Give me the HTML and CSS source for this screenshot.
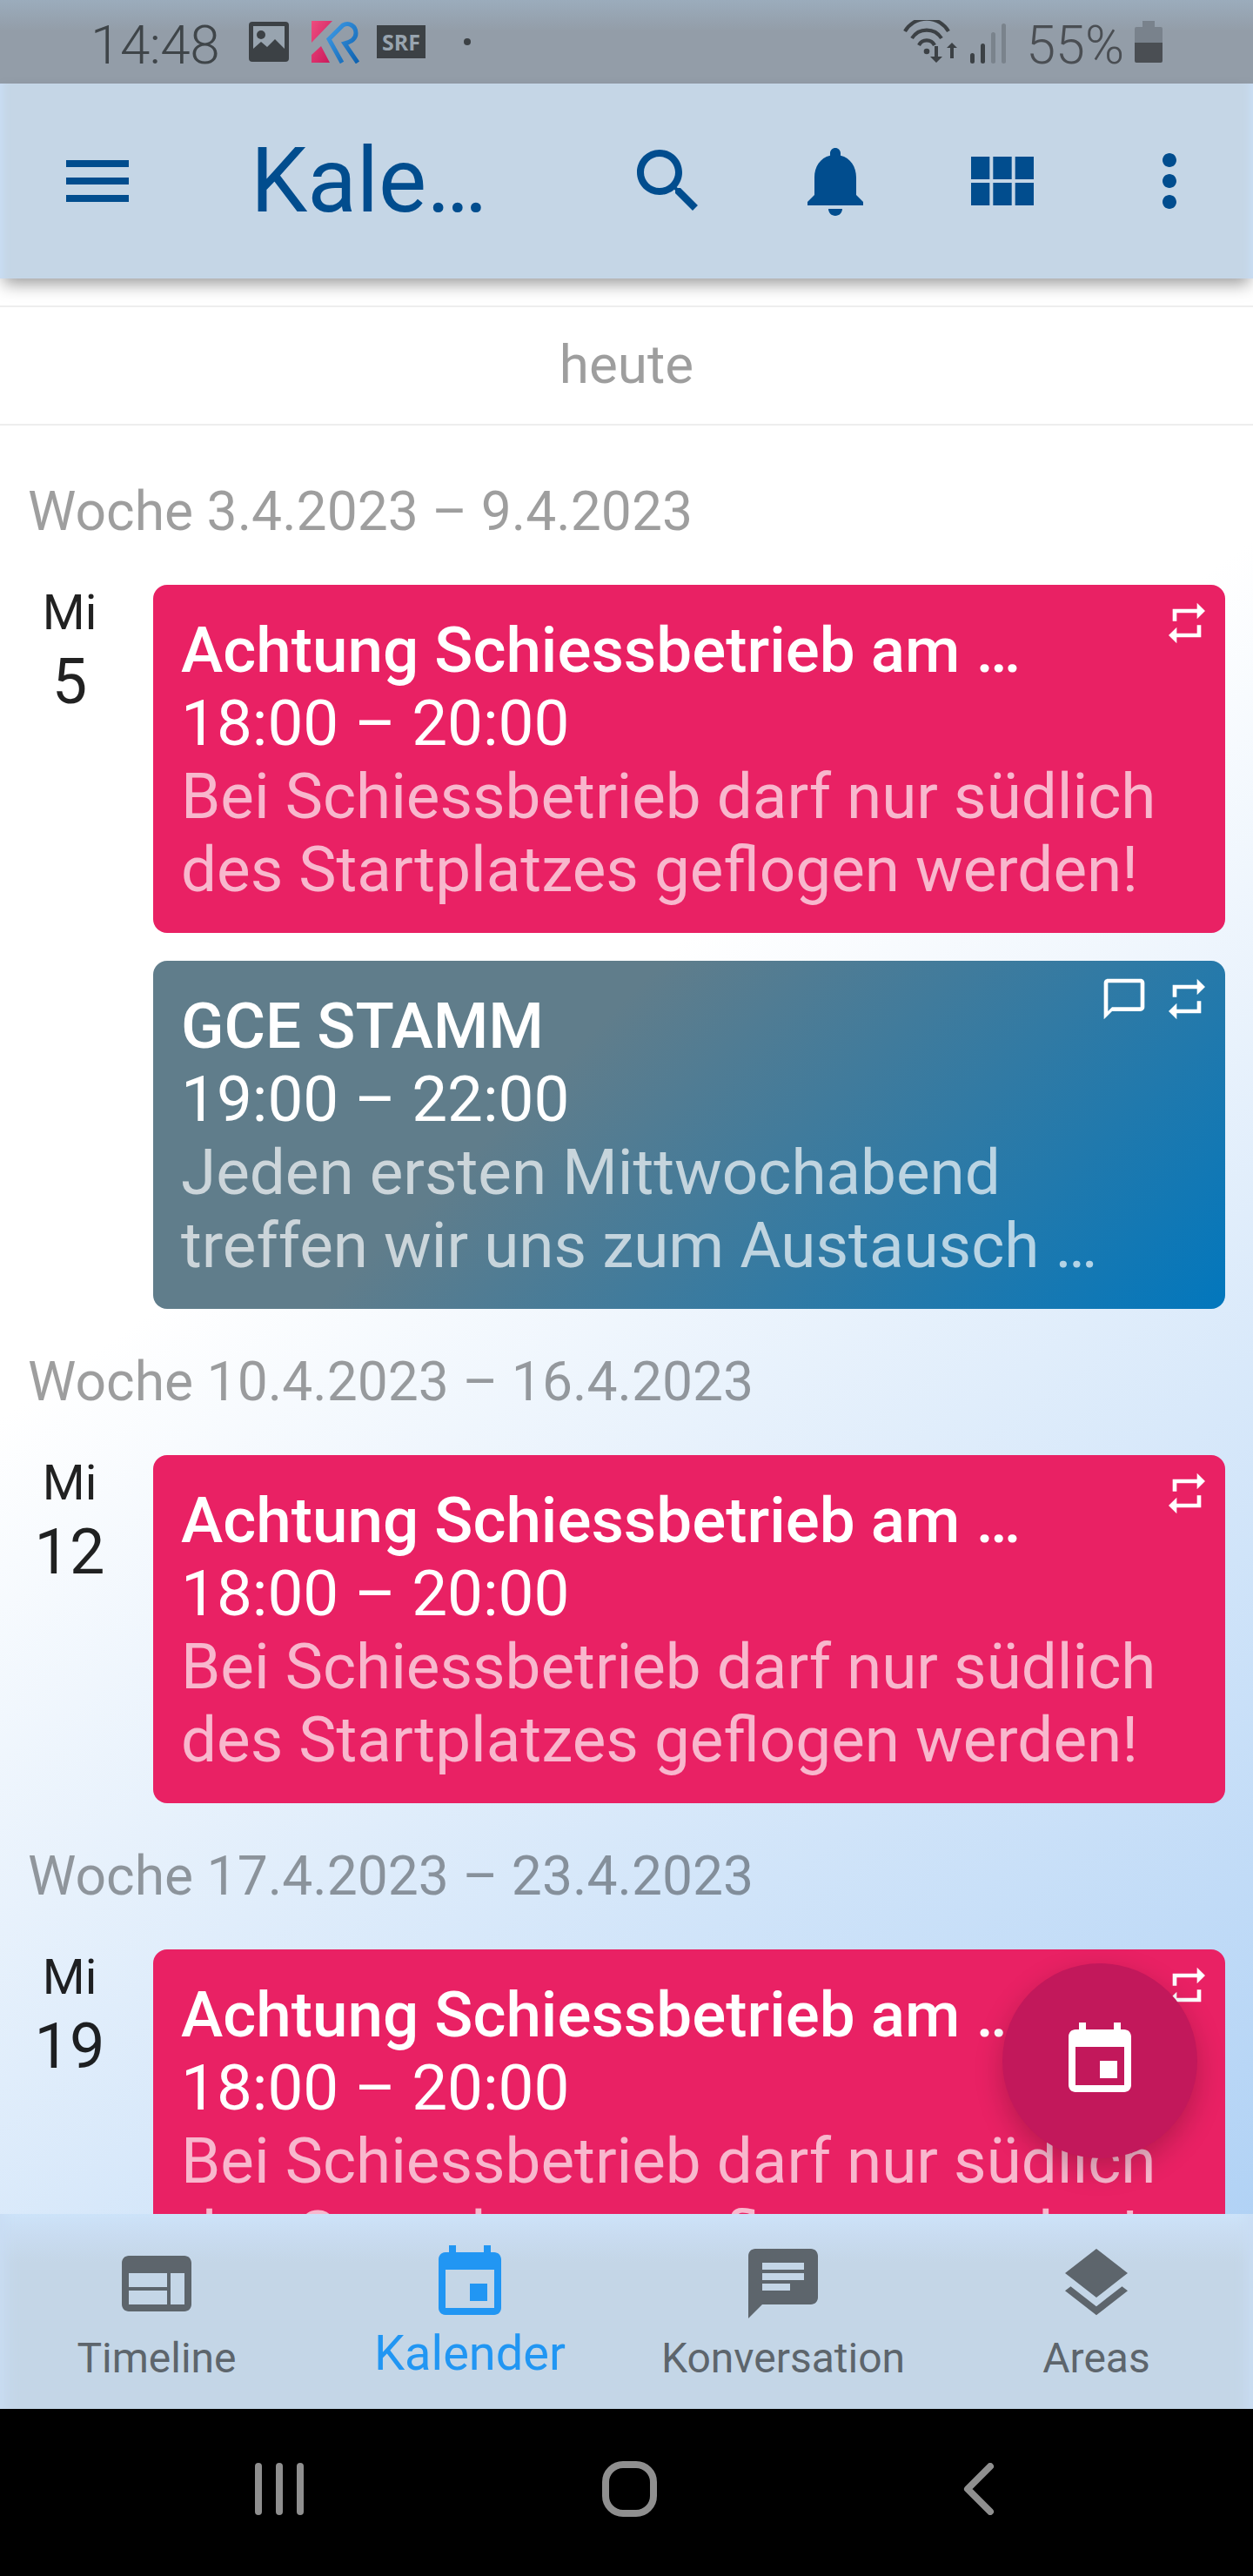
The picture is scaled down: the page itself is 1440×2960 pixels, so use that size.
FILE: index.html
```html
<!DOCTYPE html>
<html lang="de">
<head>
<meta charset="utf-8">
<title>Kalender</title>
<link rel="stylesheet" href="styles.css">
</head>
<body>
<div class="screen">
  <div class="status">
    <span class="time">14:48</span>
    <svg class="st-photo" viewBox="0 0 46 46"><rect width="46" height="46" rx="4" fill="#3c4145"/><rect x="5" y="5" width="36" height="36" fill="#98a4af"/><circle cx="14" cy="15" r="5" fill="#3c4145"/><path d="M5 31l9-8 7 6 9-9 11 11v10H5z" fill="#3c4145"/></svg>
    <svg class="st-kr" viewBox="0 0 56 50"><defs><linearGradient id="krp" x1="0" y1="0" x2="1" y2="1"><stop offset="0" stop-color="#ee4d7f"/><stop offset="1" stop-color="#c9175a"/></linearGradient><linearGradient id="krb" x1="0" y1="0" x2="1" y2="1"><stop offset="0" stop-color="#3f9be6"/><stop offset="1" stop-color="#0e62b0"/></linearGradient></defs><path d="M0 1h24L0 26zM0 49h21L11 30 0 40z" fill="url(#krp)"/><path d="M35 49L20 22 36 6c7-4 15 1 15 9 0 7-5 10-13 12l15 22" fill="none" stroke="url(#krb)" stroke-width="5"/></svg>
    <span class="st-srf">SRF</span>
    <span class="st-dot"></span>
    <svg class="st-wifi" viewBox="0 0 66 50"><g fill="none" stroke="#3c4145" stroke-width="4.2"><path d="M2 13a29 29 0 0 1 50 0"/><path d="M10 21a20 20 0 0 1 34 0"/><path d="M18 29a10 10 0 0 1 18 0"/></g><circle cx="27" cy="36" r="3.3" fill="#3c4145"/><path d="M34 30h4v12h5l-7 7-7-7h5zM52 44V32h-4l6-6 6 6h-4v12z" fill="#3c4145" transform="translate(2 0)"/></svg>
    <svg class="st-bars" viewBox="0 0 42 46"><rect x="0" y="34" width="5" height="12" rx="2.5" fill="#3c4145"/><rect x="12" y="23" width="5" height="23" rx="2.5" fill="#3c4145"/><rect x="24" y="10" width="5" height="36" rx="2.5" fill="#7a838c"/><rect x="36" y="0" width="5" height="46" rx="2.5" fill="#7a838c"/></svg>
    <span class="pct">55%</span>
    <svg class="st-batt" viewBox="0 0 32 48"><path d="M9 0h14v7h7a2 2 0 0 1 2 2v16H0V9a2 2 0 0 1 2-2h7z" fill="#79828c"/><path d="M0 25h32v21a2 2 0 0 1-2 2H2a2 2 0 0 1-2-2z" fill="#4a4e53"/></svg>
  </div>

  <header class="appbar">
    <button class="icon-btn"><svg viewBox="0 0 24 24"><path d="M3 18h18v-2H3v2zm0-5h18v-2H3v2zm0-7v2h18V6H3z"/></svg></button>
    <h1 class="title">Kale…</h1>
    <div class="actions">
      <button class="icon-btn"><svg viewBox="0 0 24 24"><path d="M15.5 14h-.79l-.28-.27C15.41 12.59 16 11.11 16 9.5 16 5.91 13.09 3 9.5 3S3 5.91 3 9.5 5.91 16 9.5 16c1.61 0 3.09-.59 4.23-1.57l.27.28v.79l5 4.99L20.49 19l-4.99-5zm-6 0C7.01 14 5 11.99 5 9.5S7.01 5 9.5 5 14 7.01 14 9.5 11.99 14 9.5 14z"/></svg></button>
      <button class="icon-btn"><svg viewBox="0 0 24 24"><path d="M12 22c1.1 0 2-.9 2-2h-4c0 1.1.89 2 2 2zm6-6v-5c0-3.07-1.64-5.64-4.5-6.32V4c0-.83-.67-1.5-1.5-1.5s-1.5.67-1.5 1.5v.68C7.63 5.36 6 7.92 6 11v5l-2 2v1h16v-1l-2-2z"/></svg></button>
      <button class="icon-btn"><svg viewBox="0 0 24 24"><path d="M14.67 5v6.5H9.33V5h5.34zm1 6.5H21V5h-5.33v6.5zm-1 7.5v-6.5H9.33V19h5.34zm1-6.5V19H21v-6.5h-5.33zm-7.34 0H3V19h5.33v-6.5zm0-1V5H3v6.5h5.33z"/></svg></button>
      <button class="icon-btn"><svg viewBox="0 0 24 24"><path d="M12 8c1.1 0 2-.9 2-2s-.9-2-2-2-2 .9-2 2 .9 2 2 2zm0 2c-1.1 0-2 .9-2 2s.9 2 2 2 2-.9 2-2-.9-2-2-2zm0 6c-1.1 0-2 .9-2 2s.9 2 2 2 2-.9 2-2-.9-2-2-2z"/></svg></button>
    </div>
  </header>

  <main class="list">
    <div class="today">heute</div>

    <h2 class="week week-first">Woche 3.4.2023 – 9.4.2023</h2>
    <section class="day">
      <div class="date"><span class="dow">Mi</span><span class="dom">5</span></div>
      <div class="cards">
        <article class="card card-pink">
          <div class="card-icons"><svg viewBox="0 0 24 24"><path d="M7 7h10v3l4-4-4-4v3H5v6h2V7zm10 10H7v-3l-4 4 4 4v-3h12v-6h-2v4z"/></svg></div>
          <div class="card-title">Achtung Schiessbetrieb am …</div>
          <div class="card-time">18:00 – 20:00</div>
          <div class="card-desc">Bei Schiessbetrieb darf nur südlich<br>des Startplatzes geflogen werden!</div>
        </article>
        <article class="card card-blue">
          <div class="card-icons"><svg viewBox="0 0 24 24"><path d="M20 2H4c-1.1 0-2 .9-2 2v18l4-4h14c1.1 0 2-.9 2-2V4c0-1.1-.9-2-2-2zm0 14H6l-2 2V4h16v12z"/></svg><svg viewBox="0 0 24 24"><path d="M7 7h10v3l4-4-4-4v3H5v6h2V7zm10 10H7v-3l-4 4 4 4v-3h12v-6h-2v4z"/></svg></div>
          <div class="card-title">GCE STAMM</div>
          <div class="card-time">19:00 – 22:00</div>
          <div class="card-desc">Jeden ersten Mittwochabend<br>treffen wir uns zum Austausch …</div>
        </article>
      </div>
    </section>

    <h2 class="week">Woche 10.4.2023 – 16.4.2023</h2>
    <section class="day">
      <div class="date"><span class="dow">Mi</span><span class="dom">12</span></div>
      <div class="cards">
        <article class="card card-pink">
          <div class="card-icons"><svg viewBox="0 0 24 24"><path d="M7 7h10v3l4-4-4-4v3H5v6h2V7zm10 10H7v-3l-4 4 4 4v-3h12v-6h-2v4z"/></svg></div>
          <div class="card-title">Achtung Schiessbetrieb am …</div>
          <div class="card-time">18:00 – 20:00</div>
          <div class="card-desc">Bei Schiessbetrieb darf nur südlich<br>des Startplatzes geflogen werden!</div>
        </article>
      </div>
    </section>

    <h2 class="week">Woche 17.4.2023 – 23.4.2023</h2>
    <section class="day">
      <div class="date"><span class="dow">Mi</span><span class="dom">19</span></div>
      <div class="cards">
        <article class="card card-pink">
          <div class="card-icons"><svg viewBox="0 0 24 24"><path d="M7 7h10v3l4-4-4-4v3H5v6h2V7zm10 10H7v-3l-4 4 4 4v-3h12v-6h-2v4z"/></svg></div>
          <div class="card-title">Achtung Schiessbetrieb am …</div>
          <div class="card-time">18:00 – 20:00</div>
          <div class="card-desc">Bei Schiessbetrieb darf nur südlich<br>des Startplatzes geflogen werden!</div>
        </article>
      </div>
    </section>

    <button class="fab"><svg viewBox="0 0 24 24"><path d="M17 12h-5v5h5v-5zM16 1v2H8V1H6v2H5c-1.11 0-1.99.9-1.99 2L3 19c0 1.1.89 2 2 2h14c1.1 0 2-.9 2-2V5c0-1.1-.9-2-2-2h-1V1h-2zm3 18H5V8h14v11z"/></svg></button>
  </main>

  <nav class="tabs">
    <div class="tab"><svg viewBox="0 0 24 24"><path d="M20 4H4c-1.1 0-1.99.9-1.99 2L2 18c0 1.1.9 2 2 2h16c1.1 0 2-.9 2-2V6c0-1.1-.9-2-2-2zm-5 14H4v-4h11v4zm0-5H4V9h11v4zm5 5h-4V9h4v9z"/></svg><span class="tab-label">Timeline</span></div>
    <div class="tab tab-active"><svg viewBox="0 0 24 24"><path d="M17 12h-5v5h5v-5zM16 1v2H8V1H6v2H5c-1.11 0-1.99.9-1.99 2L3 19c0 1.1.89 2 2 2h14c1.1 0 2-.9 2-2V5c0-1.1-.9-2-2-2h-1V1h-2zm3 18H5V8h14v11z"/></svg><span class="tab-label">Kalender</span></div>
    <div class="tab"><svg viewBox="0 0 24 24"><path d="M20 2H4c-1.1 0-1.99.9-1.99 2L2 22l4-4h14c1.1 0 2-.9 2-2V4c0-1.1-.9-2-2-2zM6 9h12v2H6V9zm8 5H6v-2h8v2zm4-6H6V6h12v2z"/></svg><span class="tab-label">Konversation</span></div>
    <div class="tab"><svg viewBox="0 0 24 24"><path d="M11.99 18.54l-7.37-5.73L3 14.07l9 7 9-7-1.63-1.27-7.38 5.74zM12 16l7.36-5.73L21 9l-9-7-9 7 1.63 1.27L12 16z"/></svg><span class="tab-label">Areas</span></div>
  </nav>

  <div class="sysnav">
    <svg class="sys-recent" viewBox="0 0 56 60"><rect x="0" y="0" width="8" height="60" rx="4"/><rect x="24" y="0" width="8" height="60" rx="4"/><rect x="48" y="0" width="8" height="60" rx="4"/></svg>
    <span class="sys-home"></span>
    <svg class="sys-back" viewBox="0 0 36 60"><path d="M31 4L5 30l26 26"/></svg>
  </div>
</div>
</body>
</html>
```

FILE: styles.css
```css
* { box-sizing: border-box; }
html, body { margin: 0; padding: 0; }
body { font-family: Roboto, "Liberation Sans", sans-serif; background: #000; }

.screen { width: 1440px; height: 2960px; display: flex; flex-direction: column; overflow: hidden; }

/* status bar */
.status { height: 96px; flex: none; display: flex; align-items: center; padding-left: 104px; padding-right: 104px; background: linear-gradient(#9bacbc 0, #939da8 36px); color: #3f4549; font-size: 62px; font-weight: 350; }
.time { line-height: 104px; height: 96px; width: 182px; flex: none; letter-spacing: -0.5px; }
.st-photo { width: 46px; height: 46px; flex: none; }
.st-kr { width: 56px; height: 50px; flex: none; margin-left: 26px; }
.st-srf { width: 56px; height: 38px; flex: none; margin-left: 19px; background: #3c4145; color: #98a4af; font-size: 25px; font-weight: 700; line-height: 38px; text-align: center; font-family: "Open Sans", Roboto, sans-serif; }
.st-dot { width: 8px; height: 8px; flex: none; margin-left: 44px; border-radius: 50%; background: #3c4145; }
.st-wifi { width: 66px; height: 50px; flex: none; margin-left: auto; }
.st-bars { width: 42px; height: 46px; flex: none; margin-left: 11px; margin-top: 4px; }
.pct { flex: none; margin-left: 22px; font-size: 61px; line-height: 104px; height: 96px; color: #4a4e53; }
.st-batt { width: 32px; height: 48px; flex: none; margin-left: 12px; }

/* app bar */
.appbar { height: 224px; flex: none; display: flex; align-items: center; padding: 0 48px 0 64px; background: #c5d6e6; position: relative; z-index: 2; box-shadow: 0 10px 18px -4px rgba(0,0,0,.4), inset 10px 0 8px -6px #c9ddf4, inset -10px 0 8px -6px #c9ddf4; }
.icon-btn { width: 96px; height: 96px; padding: 0; border: 0; background: none; flex: none; }
.icon-btn svg { display: block; width: 96px; height: 96px; fill: #014d8e; }
.title { margin: 0 0 0 128px; font-size: 104px; font-weight: 400; line-height: 120px; color: #014d8e; white-space: nowrap; }
.actions { margin-left: auto; display: flex; gap: 96px; }

/* list */
.list { flex: 1; min-height: 0; overflow: hidden; position: relative; background: linear-gradient(145deg, #fff 40.5%, #b1d2f5 100%); }
.today { margin-top: 31px; height: 138px; border-top: 2px solid #eee; border-bottom: 2px solid #eee; background: #fff; color: rgba(0,0,0,.38); font-size: 62px; line-height: 132px; text-align: center; }
.week { margin: 0; padding: 48px 32px 48px; font-size: 62.4px; font-weight: 400; line-height: 72px; color: rgba(0,0,0,.38); white-space: nowrap; }
.week-first { padding-top: 63px; }
.day { display: grid; grid-template-columns: 96px 1fr; column-gap: 48px; padding: 0 32px; }
.date { display: flex; flex-direction: column; align-items: center; color: rgba(0,0,0,.87); }
.dow { font-size: 56px; line-height: 64px; }
.dom { font-size: 72px; line-height: 84px; margin-top: 6px; }
.cards { display: flex; flex-direction: column; gap: 32px; }
.card { position: relative; min-height: 400px; padding: 33px 32px 31px; border-radius: 16px; color: #fff; font-size: 72.8px; line-height: 84px; }
.card-pink { background: #e92164; }
.card-blue { background: linear-gradient(135deg, #607d8b 36%, #0277bd 100%); }
.card-title { font-weight: 500; white-space: nowrap; }
.card-time { white-space: nowrap; }
.card-desc { color: rgba(255,255,255,.68); white-space: nowrap; }
.card-icons { position: absolute; top: 16px; right: 16px; display: flex; gap: 16px; }
.card-icons svg { display: block; width: 56px; height: 56px; fill: #fff; }

.fab { position: absolute; right: 64px; bottom: 64px; width: 224px; height: 224px; padding: 64px; border: 0; border-radius: 50%; background: #c2185b; box-shadow: 0 12px 32px rgba(0,0,0,.22); }
.fab svg { display: block; width: 96px; height: 96px; fill: #fff; }

/* tabs */
.tabs { height: 224px; flex: none; display: grid; grid-template-columns: repeat(4, 1fr); position: relative; z-index: 2; background: linear-gradient(#cde3f9 0, #c9dcf1 24px, #c4d6e7 56px); box-shadow: inset 20px 0 16px -14px #c9ddf4, inset -20px 0 16px -14px #c9ddf4; }
.tab { display: flex; flex-direction: column; align-items: center; padding-top: 32px; color: #5d656c; }
.tab svg { display: block; width: 96px; height: 96px; fill: #5d656c; }
.tab-label { font-size: 48px; line-height: 56px; margin-top: 10px; white-space: nowrap; }
.tab-active { color: #2196f3; }
.tab-active svg { fill: #2196f3; }
.tab-active .tab-label { font-size: 56px; line-height: 64px; margin-top: 0; }

/* system nav */
.sysnav { height: 192px; flex: none; background: #000; display: flex; align-items: center; position: relative; }
.sys-recent { width: 56px; height: 60px; margin-left: 293px; fill: #8f8f8f; margin-top: -8px; flex: none; }
.sys-home { width: 63px; height: 64px; margin-left: 343px; border: 8px solid #8f8f8f; border-radius: 24px; margin-top: -8px; flex: none; }
.sys-back { width: 36px; height: 60px; margin-left: 352px; margin-top: -8px; fill: none; stroke: #8f8f8f; stroke-width: 8px; stroke-linecap: round; stroke-linejoin: round; flex: none; }
```
